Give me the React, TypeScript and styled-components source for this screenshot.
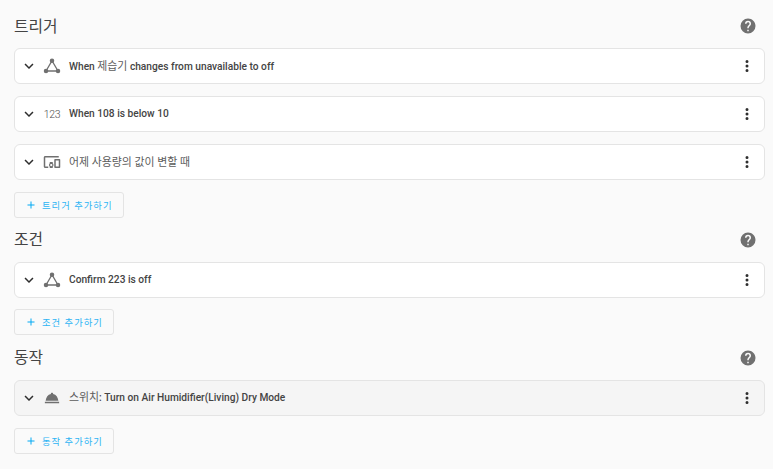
import React from "react";
import styled, { createGlobalStyle } from "styled-components";

const Global = createGlobalStyle`
  html, body { margin: 0; padding: 0; background: #fafafa; }
  body { font-family: Roboto, "Noto Sans CJK KR", sans-serif; overflow: hidden; }
`;

const Page = styled.div`
  width: 773px;
  height: 469px;
  box-sizing: border-box;
  padding: 15px 8px 0 14px;
  display: flex;
  flex-direction: column;
`;
const Section = styled.section<{ $after: number }>`
  display: flex;
  flex-direction: column;
  margin-bottom: ${(p) => p.$after}px;
`;
const Header = styled.div`
  height: 21px;
  display: flex;
  align-items: center;
  justify-content: space-between;
  margin-bottom: 12px;
  padding-right: 8px;
`;
const Title = styled.h2<{ $drop: number }>`
  margin: 0;
  padding-top: ${(p) => p.$drop}px;
  font-size: 15.8px;
  font-weight: 400;
  color: #444444;
  line-height: 21px;
`;
const Help = styled.svg`
  width: 18px;
  height: 18px;
  fill: #707070;
`;
const Card = styled.div<{ $muted?: boolean }>`
  height: 36px;
  box-sizing: border-box;
  margin-bottom: 12px;
  padding: 0 8px 0 5px;
  display: flex;
  align-items: center;
  background: ${(p) => (p.$muted ? "#f5f5f5" : "#ffffff")};
  border: 1px solid #e4e4e4;
  border-radius: 6px;
`;
const Chevron = styled.svg`
  width: 18px;
  height: 18px;
  fill: #2e2e2e;
  flex: none;
`;
const IconSlot = styled.span`
  width: 18px;
  height: 18px;
  margin: 0 8px 0 5px;
  display: flex;
  align-items: center;
  justify-content: center;
  flex: none;
  color: #707070;
`;
const Glyph = styled.svg`
  width: 18px;
  height: 18px;
  fill: currentColor;
`;
const NumberMark = styled.span`
  font-size: 10.5px;
  font-weight: 300;
  letter-spacing: -0.4px;
  color: #505050;
`;
const Label = styled.span<{ $raise: number }>`
  flex: 1;
  padding-bottom: ${(p) => p.$raise}px;
  font-size: 10.2px;
  font-weight: 500;
  color: #444444;
`;
const Hangul = styled.span`
  font-size: 10.9px;
  font-weight: 400;
  color: #5c5c5c;
`;
const Menu = styled.svg`
  width: 18px;
  height: 18px;
  fill: #2e2e2e;
  flex: none;
`;
const AddButton = styled.button<{ $lift?: boolean }>`
  align-self: flex-start;
  height: 26px;
  box-sizing: border-box;
  margin-top: ${(p) => (p.$lift ? "-1px" : "0")};
  padding: 0 10px 0 10px;
  display: flex;
  align-items: center;
  gap: 5px;
  background: #fafafa;
  border: 1px solid #e4e4e4;
  border-radius: 3px;
  font-family: inherit;
  font-size: 9.3px;
  font-weight: 400;
  letter-spacing: 1.05px;
  color: #2db4f4;
`;
const Plus = styled.svg`
  width: 12px;
  height: 12px;
  fill: #03a9f4;
`;

const paths = {
  chevron: "M7.41,8.58L12,13.17L16.59,8.58L18,10L12,16L6,10L7.41,8.58Z",
  dots: "M12,16A2,2 0 0,1 14,18A2,2 0 0,1 12,20A2,2 0 0,1 10,18A2,2 0 0,1 12,16M12,10A2,2 0 0,1 14,12A2,2 0 0,1 12,14A2,2 0 0,1 10,12A2,2 0 0,1 12,10M12,4A2,2 0 0,1 14,6A2,2 0 0,1 12,8A2,2 0 0,1 10,6A2,2 0 0,1 12,4Z",
  help: "M15.07,11.25L14.17,12.17C13.45,12.89 13,13.5 13,15H11V14.5C11,13.39 11.45,12.39 12.17,11.67L13.41,10.41C13.78,10.05 14,9.55 14,9C14,7.89 13.1,7 12,7A2,2 0 0,0 10,9H8A4,4 0 0,1 12,5A4,4 0 0,1 16,9C16,9.88 15.64,10.67 15.07,11.25M13,19H11V17H13M12,2A10,10 0 0,0 2,12A10,10 0 0,0 12,22A10,10 0 0,0 22,12C22,6.47 17.5,2 12,2Z",
  plus: "M19,13H13V19H11V13H5V11H11V5H13V11H19V13Z",
  devices: "M3 6H21V4H3C1.9 4 1 4.9 1 6V18C1 19.1 1.9 20 3 20H7V18H3V6M13 12H9V13.78C8.39 14.33 8 15.11 8 16C8 16.89 8.39 17.67 9 18.22V20H13V18.22C13.61 17.67 14 16.88 14 16S13.61 14.33 13 13.78V12M11 17.5C10.17 17.5 9.5 16.83 9.5 16S10.17 14.5 11 14.5 12.5 15.17 12.5 16 11.83 17.5 11 17.5M22 8H16C15.5 8 15 8.5 15 9V19C15 19.5 15.5 20 16 20H22C22.5 20 23 19.5 23 19V9C23 8.5 22.5 8 22 8M21 18H17V10H21V18Z",
  bell: "M2.5 17H21.5V19H2.5V17ZM12 5C13 5 13.6 5.6 13.5 6.6C17.5 7.4 20 11 20.5 15.8H3.5C4 11 6.5 7.4 10.5 6.6C10.4 5.6 11 5 12 5Z",
};

const Triangle = () => (
  <Glyph viewBox="0 0 24 24">
    <path d="M12 5L4 18.7H20Z" fill="none" stroke="currentColor" strokeWidth="1.8" />
    <circle cx="12" cy="5" r="3" />
    <circle cx="4" cy="18.7" r="3" />
    <circle cx="20" cy="18.7" r="3" />
  </Glyph>
);
const Path = ({ d }: { d: string }) => (
  <Glyph viewBox="0 0 24 24">
    <path d={d} />
  </Glyph>
);

type Row = { icon: React.ReactNode; text: React.ReactNode; id: string; muted?: boolean; raise: number };

const AutomationRow = ({ icon, text, muted, raise }: Row) => (
  <Card $muted={muted}>
    <Chevron viewBox="0 0 24 24">
      <path d={paths.chevron} />
    </Chevron>
    <IconSlot>{icon}</IconSlot>
    <Label $raise={raise}>{text}</Label>
    <Menu viewBox="0 0 24 24">
      <path d={paths.dots} />
    </Menu>
  </Card>
);

const sections: {
  title: string;
  add: string;
  after: number;
  drop: number;
  lift?: boolean;
  rows: Row[];
}[] = [
  {
    title: "트리거",
    add: "트리거 추가하기",
    after: 11,
    drop: 1,
    rows: [
      {
        id: "a",
        raise: 2,
        icon: <Triangle />,
        text: (
          <>
            When <Hangul>제습기</Hangul> changes from unavailable to off
          </>
        ),
      },
      { id: "b", raise: 2, icon: <NumberMark>123</NumberMark>, text: "When 108 is below 10" },
      { id: "c", raise: 2, icon: <Path d={paths.devices} />, text: <Hangul>어제 사용량의 값이 변할 때</Hangul> },
    ],
  },
  {
    title: "조건",
    add: "조건 추가하기",
    after: 12,
    drop: 0,
    lift: true,
    rows: [{ id: "d", raise: 2, icon: <Triangle />, text: "Confirm 223 is off" }],
  },
  {
    title: "동작",
    add: "동작 추가하기",
    after: 0,
    drop: 0,
    rows: [
      {
        id: "e",
        raise: 4,
        icon: <Path d={paths.bell} />,
        text: (
          <>
            <Hangul>스위치</Hangul>: Turn on Air Humidifier(Living) Dry Mode
          </>
        ),
        muted: true,
      },
    ],
  },
];

export default function App() {
  return (
    <Page>
      <Global />
      {sections.map((s) => (
        <Section key={s.title} $after={s.after}>
          <Header>
            <Title $drop={s.drop}>{s.title}</Title>
            <Help viewBox="0 0 24 24">
              <path d={paths.help} />
            </Help>
          </Header>
          {s.rows.map((r) => (
            <AutomationRow key={r.id} {...r} />
          ))}
          <AddButton $lift={s.lift}>
            <Plus viewBox="0 0 24 24">
              <path d={paths.plus} />
            </Plus>
            {s.add}
          </AddButton>
        </Section>
      ))}
    </Page>
  );
}
